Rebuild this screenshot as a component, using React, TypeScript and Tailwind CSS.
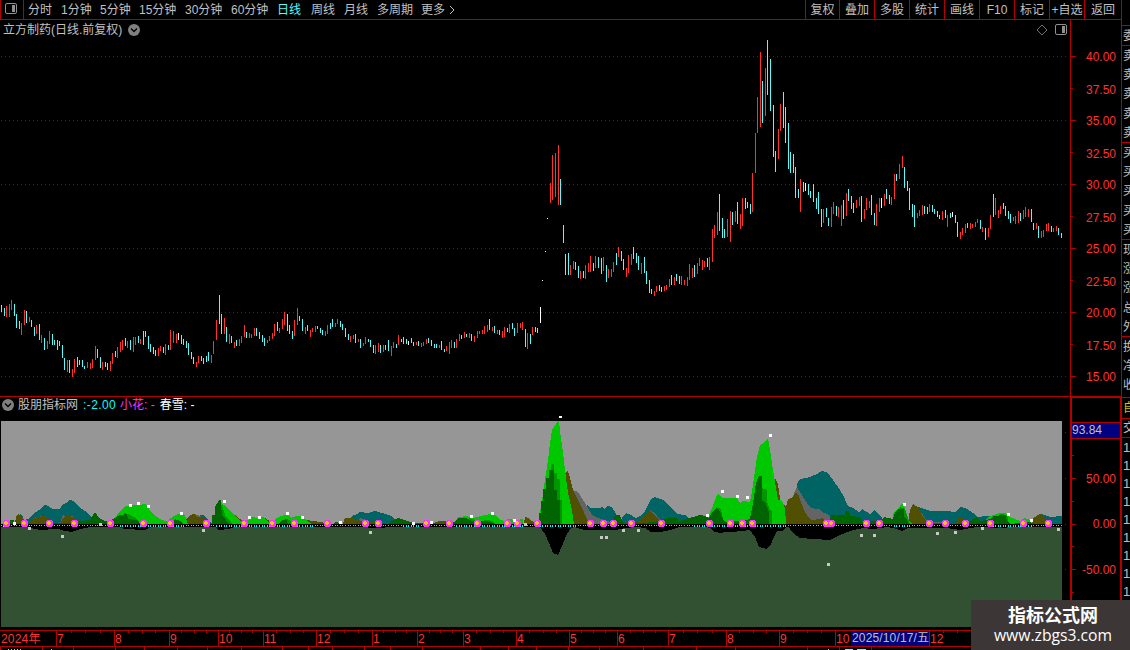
type Tone = 'r' | 'c' | 'w';

interface Bar {
  x: number;
  top: number;
  bottom: number;
  tone: Tone;
}

const TONES: Record<Tone, string> = { r: '#ff3232', c: '#54fcfc', w: '#ffffff' };

// x, tone, high-low
const BAR_DATA = `
1c305-312 4c308-316 6r306-317 9r304-317 11r300-310 14c304-316 16c314-328 19c321-329 21r323-335 24r310-325
26c311-323 29r317-322 31c320-327 34c327-336 36r325-334 39c324-340 41r335-343 44c338-350 47r341-349 49r331-344
52c334-345 54c340-345 57c340-350 59c341-346 62c345-358 64c358-370 67r360-372 69c360-373 72r369-377 74r359-373
77c357-367 79c360-365 82c360-367 84c366-369 87r362-368 90r363-369 92r359-368 95r346-360 97c349-358 100c357-368
102r362-370 105c362-367 107c363-370 110r361-371 112r353-364 115c351-357 117r347-358 120r342-352 122r340-350
125c338-346 127r341-348 130c340-350 133r337-352 135r337-345 138c336-343 140r339-344 143c331-345 145c331-337
148c336-349 150c344-352 153c347-354 155c350-356 158r348-356 160r346-351 163c347-353 165r344-355 168c345-350
170r330-350 173r331-343 176r334-343 178w333-340 181c335-344 183c339-345 186c341-348 188c343-355 191c352-359
193c357-364 196r362-367 198r356-363 201c356-361 203c358-364 206c356-362 208c352-361 211r355-363 213r341-354
216r320-340 219c295-324 221c314-334 224r318-334 226c327-342 229r334-344 231c336-343 234r342-348 236c340-346
239r339-346 241r336-343 244r325-337 246c332-338 249r333-338 251r334-338 254r328-336 256c328-336 259c332-339
262c335-342 264c338-346 267r340-343 269r336-341 272r333-339 274r324-336 277c322-331 279r328-333 282r319-329
284r312-325 287c314-331 289c325-334 292c331-339 294r320-336 297r308-325 299c316-321 302c319-331 305r327-334
307c325-331 310r330-337 312r328-332 315r326-332 317c326-329 320c328-333 322c330-335 325r331-336 327r325-334
330c323-329 332c319-327 335r323-327 337r319-324 340c321-327 342c324-330 345c328-337 348c334-340 350r336-342
353r335-339 355c334-343 358r339-342 360c339-348 363r343-346 365r337-344 368c339-342 370c340-347 373c345-353
375r345-354 378r343-352 380c345-353 383r345-352 385c345-350 388c340-351 391r346-356 393r342-348 396c344-348
398r335-345 401c339-342 403c337-344 406c339-344 408w341-345 411c338-343 413c342-346 416r342-345 418c341-346
421r343-347 423r342-346 426r339-344 428c338-343 431c340-346 434c344-348 436c344-348 439r345-348 441c341-350
444c349-352 446r346-351 449r342-354 451r340-348 454c342-348 456r339-348 459r334-341 461c335-339 464r332-338
466c334-337 469r333-338 471c334-341 474r336-342 477r331-338 479r331-334 482r330-334 484r326-334 487r325-332
489c319-330 492r327-331 494c326-333 497r330-334 499c330-335 502r331-338 504r327-337 507c328-332 509r324-333
512c323-329 514c328-336 517r323-333 520r323-328 522r322-330 525c329-347 527r333-349 530c334-344 532r327-335
535c327-332 537c328-333 540w307-323 542w280-281 545w251-252 547w218-219 550r183-203 552r155-200 555r153-197
558r145-205 560c179-205 563c225-243 565c254-275 568c253-275 570r265-275 573r261-269 575c262-270 578c266-278
580r271-279 583c271-278 585r265-279 588r263-272 590r256-272 593c263-271 595r256-268 598c257-268 601c258-274
603r257-271 606c265-282 608r269-278 611r269-277 613r262-272 616c253-265 618r247-257 621c251-261 623c259-270
626r268-277 628r255-273 631r254-265 633c247-259 636c253-263 638c256-270 641r263-274 644c257-273 646c271-284
649c280-293 651c289-294 654r291-296 656r286-292 659c285-291 661c287-292 664r286-291 666r285-290 669r279-287
671c275-285 674r277-285 676c274-281 679c276-284 681r276-285 684r280-285 687r277-286 689r264-280 692r268-278
694c265-277 697r263-274 699r258-266 702r260-270 704r261-267 707c258-267 709r257-270 712r229-262 714r225-238
717r212-235 719c194-231 722c218-238 724c229-238 727r219-237 730r211-242 732c212-225 735r211-222 737c202-224
740r214-229 742r198-226 745c198-209 747c202-208 750c204-214 752r173-212 755r133-173 757r97-133 760r52-127
762c81-123 765r68-116 767c40-95 770c59-111 773c105-157 775c151-172 778r129-159 780r104-131 783c92-128
785c107-143 788c123-169 790c152-173 793c154-173 795c167-198 798c189-198 800r179-212 803c182-192 805w183-191
808c184-195 810c191-198 813c184-202 816c198-209 818c192-214 821c209-227 823r209-223 826c208-217 828c218-226
831r207-227 833r202-214 836c206-216 838r207-217 841r205-226 843c200-219 846r193-216 848c189-201 851c196-209
853c203-213 856r200-208 859r197-206 861c196-222 864r209-219 866r198-210 869r201-208 871c195-215 874c213-225
876r204-226 879r198-212 881w198-208 884r194-206 886c189-199 889c195-204 891r197-205 894r174-199 896c174-181
899r164-179 902r156-168 904c167-188 907c181-191 909c188-210 912c204-217 914c205-227 917r213-218 919r210-216
922r205-215 924c206-214 927c207-214 929r204-212 932c205-212 934c209-214 937c211-217 939c215-219 942r211-220
945c210-218 947r215-227 950c213-218 952w212-217 955c215-223 957c222-237 960r232-239 962r228-235 965r224-233
967c223-228 970r223-229 972r224-228 975r222-227 977r219-223 980c220-229 982r227-232 985c228-240 988r228-237
990r215-229 993c194-217 995r198-215 998r210-218 1000r206-214 1003c203-209 1005c206-216 1008c211-219 1010c214-223
1013r217-221 1015r216-224 1018r211-223 1020c213-221 1023r210-219 1025r207-217 1028r209-217 1031c209-222
1033c223-230 1036r223-229 1038c226-238 1041r231-238 1043r230-237 1046r224-231 1048r223-231 1051c226-232
1053r228-232 1056r226-231 1058c228-235 1061c233-238`;

const bars: Bar[] = BAR_DATA.trim().split(/\s+/).map(s => {
  const m = s.match(/^(\d+)([rcw])(\d+)-(\d+)$/)!;
  return { x: +m[1], tone: m[2] as Tone, top: +m[3], bottom: +m[4] };
});

const BASE = 524;

const layers = [
  {
    color: '#006464',
    points:
      '15,524 17,518 20,514 22,515 24,520 28,519 33,514 39,510 45,505 48,506 53,509 60,509 62,505 66,503 70,500 73,501 78,506 85,511 90,515 92,518 95,524 195,524 196,516 203,515 208,519 212,524 345,524 352,516 357,514 360,512 368,513 375,511 382,513 391,516 396,521 398,524 586,524 587,505 590,508 600,508 602,507 604,509 608,506 612,507 616,514 620,522 622,518 626,513 631,515 636,518 642,515 645,511 651,499 655,497 663,500 668,504 672,509 677,514 685,515 688,517 692,524 795,524 797,484 800,479 810,477 817,474 822,471 828,473 833,480 838,487 843,495 848,506 853,508 859,512 862,509 867,512 870,515 874,510 882,517 883,524 916,524 918,507 930,511 947,511 955,512 961,507 967,509 973,513 977,517 987,516 993,517 1000,524 1039,524 1041,514 1050,517 1062,516',
  },
  {
    color: '#646464',
    points:
      '28,524 35,517 45,516 50,518 55,524 60,524 63,515 67,517 72,516 75,519 85,524 186,524 190,517 195,514 200,516 206,520 210,524 355,524 360,518 366,520 370,524 572,524 573,490 578,492 583,500 588,508 592,515 598,518 605,520 615,524 645,524 650,510 655,513 660,520 668,524 786,524 788,500 792,498 797,487 800,492 805,500 810,507 815,509 820,509 823,513 828,514 832,519 836,524 914,524 917,508 923,515 928,522 947,522 950,524',
  },
  {
    color: '#505000',
    points:
      '15,524 16,517 18,514 22,516 24,522 28,524 33,518 38,517 43,516 48,517 55,523 60,524 63,518 68,515 75,518 85,523 140,524 152,515 160,519 168,522 184,524 186,520 190,515 194,514 198,517 205,518 208,524 232,524 235,515 240,519 245,524 265,518 270,521 275,524 305,524 307,520 320,522 330,524 343,524 345,518 352,518 358,520 365,522 375,521 378,524 430,524 440,521 445,521 450,524 500,520 505,524 524,524 525,517 528,518 532,521 535,524 560,524 565,473 568,471 570,478 573,490 578,500 582,508 586,517 590,524 624,524 627,520 632,524 638,521 644,516 650,511 654,515 660,521 665,524 774,524 775,478 778,484 780,499 785,506 786,507 788,499 792,498 796,492 799,496 802,505 805,512 809,518 812,520 819,519 822,518 827,523 830,524 873,524 875,517 877,524 908,524 910,510 913,504 918,507 922,515 928,523 955,524 958,518 962,517 967,524 1032,524 1033,518 1040,514 1045,518 1050,524',
  },
  {
    color: '#00c800',
    points:
      '108,524 117,515 122,509 126,506 133,505 138,505 146,504 148,507 151,512 155,516 162,520 168,522 169,519 176,515 181,513 185,515 188,524 215,524 217,507 219,501 222,504 226,506 230,511 233,514 238,519 243,523 248,520 252,517 258,518 263,517 267,521 272,523 275,519 281,516 287,514 291,518 296,516 301,516 305,519 312,524 455,524 458,517 467,516 472,518 477,517 485,515 490,514 495,515 499,519 504,521 508,519 516,520 523,519 523,524 538,524 542,500 546,473 548,460 550,443 552,430 556,424 559,420 560,432 563,452 565,470 568,493 572,510 574,524 703,524 705,517 709,515 712,508 717,495 719,494 722,498 730,498 737,498 740,503 743,501 750,502 752,492 754,477 757,457 760,445 764,443 768,438 770,450 773,470 775,482 778,500 780,500 783,503 785,508 786,524 893,524 893,514 900,506 902,503 905,508 907,515 910,522 912,524 980,524 990,516 1000,513 1005,513 1010,517 1015,519 1020,521 1025,518 1030,520 1032,524',
  },
  {
    color: '#009600',
    points:
      '118,524 119,519 124,513 130,515 136,518 140,524 217,524 219,501 223,508 226,517 230,520 232,524 283,524 285,519 290,520 293,524 465,524 469,518 480,521 488,520 494,522 495,524 551,524 551,464 554,464 554,473 557,473 557,479 560,479 560,500 562,500 562,524 715,524 716,507 721,509 723,520 726,524 756,524 762,488 767,490 767,501 769,508 772,512 772,524 898,524 900,507 905,509 909,522 910,524 993,524 1000,514 1007,515 1009,524',
  },
  {
    color: '#006400',
    points:
      '9,524 10,520 14,520 14,524 75,523 80,521 90,520 94,513 97,514 98,517 103,520 108,522 115,518 120,515 127,514 128,519 138,520 140,524 171,524 175,519 180,521 184,524 212,524 212,515 215,515 215,507 219,500 221,500 221,508 223,517 226,520 229,524 279,524 281,521 286,519 288,524 333,524 336,522 342,524 388,524 392,521 398,518 402,519 413,523 440,524 455,522 458,518 465,518 468,519 475,522 486,521 495,524 539,524 539,513 541,513 541,501 543,501 543,489 546,489 546,478 549,478 549,470 554,470 554,490 557,490 557,500 560,500 560,524 613,524 615,515 620,515 622,521 625,524 655,522 667,518 675,517 680,521 688,518 693,517 700,515 705,516 709,518 712,512 717,508 720,512 723,519 725,522 743,521 750,519 752,509 754,497 756,483 759,476 762,476 762,501 765,502 769,512 769,524 829,524 831,515 845,515 845,511 849,511 850,516 860,517 862,522 882,520 884,517 893,519 895,512 898,509 904,509 904,517 907,520 909,524 965,524 973,519 977,517 980,521 990,519 993,516 1005,515 1007,520 1010,524 1030,522 1032,524',
  },
];

const SHADOW =
  '1,526 27,527 40,530 45,530 50,529 58,529 65,531 72,532 80,529 90,527 118,527 125,529 145,530 152,527 215,527 219,530 228,529 235,527 360,527 375,528 395,527 540,527 545,534 549,543 553,553 558,555 562,546 566,536 570,529 574,527 585,530 600,530 615,530 625,528 637,527 645,528 651,532 660,532 670,530 680,527 706,527 710,528 715,532 720,533 725,532 733,532 750,530 755,537 759,547 767,549 771,544 774,537 777,531 782,531 788,526 793,533 800,538 813,539 830,540 840,535 850,531 863,528 873,529 887,527 897,529 902,531 908,528 930,528 947,528 960,530 977,527 1003,528 1020,526 1062,526';

const flowers = [
  6, 24, 49, 74, 110, 143, 170, 206, 244, 272, 294, 327, 365, 378, 426, 449, 477, 507, 517, 537, 590, 603, 613, 631,
  661, 709, 730, 742, 752, 826, 831, 866, 879, 929, 945, 965, 990, 1023, 1048,
];

const snow = [
  [14, 523], [130, 505], [138, 503], [148, 506], [181, 513], [224, 501], [249, 517], [259, 517], [287, 513], [302, 517],
  [340, 522], [413, 523], [431, 522], [471, 516], [492, 513], [514, 520], [707, 515], [722, 491], [737, 496],
  [747, 497], [770, 435], [904, 504], [1008, 514], [1031, 520],
];

const dust = [
  [4, 525], [29, 528], [62, 536], [100, 524], [203, 530], [370, 532], [525, 524], [601, 537], [606, 537], [623, 530],
  [638, 530], [828, 564], [861, 535], [874, 535], [937, 533], [955, 532], [982, 528], [1058, 529],
];

// stretches where the zero line is drawn with two pixel high marks
const tall = [[118, 185], [215, 312], [402, 420], [455, 523], [538, 575], [694, 786], [893, 911], [990, 1032]];

const tabs = [
  { label: '分时', cls: 'w-[33px]' },
  { label: '1分钟', cls: 'w-[39px]' },
  { label: '5分钟', cls: 'w-[39px]' },
  { label: '15分钟', cls: 'w-[46px]' },
  { label: '30分钟', cls: 'w-[46px]' },
  { label: '60分钟', cls: 'w-[46px]' },
  { label: '日线', cls: 'w-[34px] text-[#54fcfc]' },
  { label: '周线', cls: 'w-[33px]' },
  { label: '月线', cls: 'w-[33px]' },
  { label: '多周期', cls: 'w-[44px]' },
  { label: '更多', cls: 'w-[28px]' },
];

const tools = ['复权', '叠加', '多股', '统计', '画线', 'F10', '标记', '+自选', '返回'];

const prices = ['40.00', '37.50', '35.00', '32.50', '30.00', '27.50', '25.00', '22.50', '20.00', '17.50', '15.00'];

const months = [
  { x: 56, label: '7' }, { x: 114, label: '8' }, { x: 169, label: '9' }, { x: 218, label: '10' },
  { x: 263, label: '11' }, { x: 316, label: '12' }, { x: 372, label: '1' }, { x: 417, label: '2' },
  { x: 463, label: '3' }, { x: 516, label: '4' }, { x: 569, label: '5' }, { x: 617, label: '6' },
  { x: 668, label: '7' }, { x: 726, label: '8' }, { x: 779, label: '9' }, { x: 835, label: '10' },
  { x: 929, label: '12' }, { x: 985, label: '' },
];

const sideGroups = [
  { cls: 'h-[20px]', chars: ['委'], row: 'h-[19px]' },
  { cls: 'h-[97px]', chars: ['卖', '卖', '卖', '卖', '卖'], row: 'h-[19.4px]' },
  { cls: 'h-[97px]', chars: ['买', '买', '买', '买', '买'], row: 'h-[19.4px]' },
  { cls: 'h-[97px]', chars: ['现', '涨', '涨', '总', '外'], row: 'h-[19.4px]' },
  { cls: 'h-[61px]', chars: ['换', '净', '收'], row: 'h-[19.4px]' },
  { cls: 'h-[21px] text-[#c8c800]', chars: ['自'], row: 'h-[20px]' },
  { cls: 'h-[19px]', chars: ['交'], row: 'h-[18px]' },
  { cls: 'h-[212px]', chars: ['1', '1', '1', '1', '1', '1', '1', '1', '1'], row: 'h-[18px] text-[13px]' },
];

function ChevronDot() {
  return (
    <svg width="12" height="12" viewBox="0 0 12 12" className="shrink-0">
      <circle cx="6" cy="6" r="6" fill="#808080" />
      <path d="M3 4.5 L6 7.5 L9 4.5" fill="none" stroke="#000" strokeWidth="1.3" />
    </svg>
  );
}

function PanelIcon() {
  return (
    <svg width="12" height="11" viewBox="0 0 12 11" className="shrink-0">
      <rect x="0.5" y="0.5" width="11" height="10" rx="1.5" fill="none" stroke="#909090" />
      <rect x="7" y="2" width="3" height="7" fill="#909090" />
    </svg>
  );
}

function Toolbar() {
  return (
    <div className="flex h-[20px] w-[1122px] shrink-0 border-b border-[#b40000]">
      <div className="flex w-[24px] items-center border-x border-[#b40000] pb-0.5 pl-1">
        <PanelIcon />
      </div>
      <div className="flex items-center pl-1">
        {tabs.map(t => (
          <span key={t.label} className={t.cls}>{t.label}</span>
        ))}
        <svg width="6" height="10" viewBox="0 0 6 10">
          <path d="M1 1 L5 5 L1 9" fill="none" stroke="#c0c0c0" />
        </svg>
      </div>
      <div className="ml-auto flex">
        {tools.map((t, i) => (
          <span
            key={t}
            className={`flex items-center justify-center border-l border-[#b40000] ${
              i === 0 ? 'w-[34px]' : i === 8 ? 'w-[37px]' : 'w-[35px]'
            }`}
          >
            {t}
          </span>
        ))}
        <span className="w-px bg-[#b40000]" />
      </div>
    </div>
  );
}

function PriceChart() {
  return (
    <div className="w-[1070px]">
      <div className="flex h-[20px] items-center pb-px pl-[3px]">
        <span>立方制药(日线.前复权)</span>
        <span className="ml-1.5"><ChevronDot /></span>
        <svg width="12" height="12" viewBox="0 0 12 12" className="ml-auto">
          <path d="M6 1 L11 6 L6 11 L1 6 Z" fill="none" stroke="#707070" />
        </svg>
        <span className="ml-[7px] mr-[3px]"><PanelIcon /></span>
      </div>
      <svg width="1070" height="356" viewBox="0 40 1070 356" shapeRendering="crispEdges" className="block">
        {[56, 120, 184, 248, 312, 376].map(y => (
          <line key={y} x1="1" x2="1068" y1={y + 0.5} y2={y + 0.5} stroke="#960000" strokeDasharray="1 3" />
        ))}
        {bars.map(b => (
          <rect key={b.x} x={b.x} y={b.top} width="1" height={b.bottom - b.top} fill={TONES[b.tone]} />
        ))}
      </svg>
    </div>
  );
}

function PriceAxis() {
  return (
    <div className="w-[52px] border-x border-[#b40000] pt-[20px] text-[#ff3232]">
      {prices.map((p, i) => (
        <div key={p} className="flex h-[32px] items-center">
          <span className={`h-px bg-[#b40000] ${i % 2 === 0 ? 'w-[5px]' : 'w-[2px]'}`} />
          <span className={`ml-auto mr-[5px] ${i % 2 === 0 ? 'pt-px' : 'pt-[3px]'}`}>{p}</span>
        </div>
      ))}
    </div>
  );
}

function Indicator() {
  return (
    <div className="w-[1070px]">
      <div className="flex h-[24px] items-center pb-[8px] pl-[2px]">
        <ChevronDot />
        <span className="ml-[4px]">股朋指标网</span>
        <span className="ml-[5px] tracking-[0.4px] text-[#00ffff]">:-2.00</span>
        <span className="ml-1 text-[#ff32ff]">小花: -</span>
        <span className="ml-[5px] text-white">春雪: -</span>
      </div>
      <svg width="1070" height="209" viewBox="0 421 1070 209" shapeRendering="crispEdges" className="block overflow-visible">
        <rect x="1" y="421" width="1061" height="103" fill="#969696" />
        <rect x="1" y="527" width="1061" height="100" fill="#325032" />
        {layers.map(l => (
          <polygon key={l.color} points={`1,${BASE} ${l.points} 1062,${BASE}`} fill={l.color} />
        ))}
        <polygon points={`1,524 ${SHADOW} 1062,524`} fill="#000" />
        {bars.map(b => (
          <rect
            key={b.x}
            x={b.x}
            y="525"
            width="1"
            height={tall.some(([from, to]) => b.x >= from && b.x <= to) ? 2 : 1}
            fill="#00ffff"
          />
        ))}
        {dust.map(([x, y]) => (
          <rect key={`${x}-${y}`} x={x - 1} y={y - 1} width="3" height="3" fill="#c8c8c8" />
        ))}
        {flowers.map(x => (
          <g key={x}>
            <path d={`M${x - 2} 520h5v1h1v5h-1v1h-5v-1h-1v-5h1z`} fill="#ff32ff" />
            <path d={`M${x - 1} 521h2v1h1v2h-1v1h-2v-1h-1v-2h1z`} fill="#ffc800" />
          </g>
        ))}
        {snow.map(([x, y]) => (
          <rect key={`${x}-${y}`} x={x - 1} y={y - 1} width="3" height="3" fill="#fff" />
        ))}
        <rect x="559" y="416" width="3" height="2" fill="#fff" />
        {[432, 478, 524, 569].map(y => (
          <rect key={y} x="1065" y={y} width="1" height="1" fill="#b40000" />
        ))}
      </svg>
    </div>
  );
}

function IndicatorAxis() {
  return (
    <div className="flex w-[52px] flex-col border-x-2 border-t border-[#b40000] text-[#ff3232]">
      <div className="h-[24px]" />
      <div className="flex h-[17px] items-center border-y border-[#b40000] bg-[#000080] pb-px text-[#c0c0c0]">93.84</div>
      <div className="flex h-[17px] items-end"><span className="h-px w-[2px] bg-[#b40000]" /></div>
      {['50.00', '0.00', '-50.00'].map(v => (
        <div key={v} className="relative flex h-[45.6px] items-center">
          <span className="h-px w-[4px] bg-[#b40000]" />
          <span className="ml-auto mr-[4px]">{v}</span>
          <span className="absolute bottom-0 left-0 h-px w-[2px] bg-[#b40000]" />
        </div>
      ))}
    </div>
  );
}

function TimeAxis() {
  return (
    <div className="relative flex h-[17px] w-[1122px] border-y border-[#b40000] text-[#ff3232]">
      <span className="w-[56px] pl-px leading-[17px] tracking-[0.2px]">2024年</span>
      {months.slice(0, -1).map((m, i) => {
        const width = months[i + 1].x - m.x;
        return (
          <span key={m.x} className="flex h-full shrink-0 border-l border-[#b40000]" style={{ width }}>
            <span className="w-0 leading-[17px]">{m.label}</span>
            <span className="flex h-[2px] flex-1 justify-evenly">
              <i className="w-px bg-[#b40000]" />
              <i className="w-px bg-[#b40000]" />
              <i className="w-px bg-[#b40000]" />
            </span>
          </span>
        );
      })}
      <span className="absolute left-[851px] top-0 h-[15px] w-[78px] bg-[#000080] pl-px leading-[15px] tracking-[0.15px] whitespace-nowrap text-[#c0c0c0]">
        2025/10/17/五
      </span>
    </div>
  );
}

function FooterStrip() {
  return (
    <svg width="1122" height="3" viewBox="0 0 1122 3" shapeRendering="crispEdges" className="block">
      {[0, 42, 73, 115, 144, 177, 207, 241, 282, 308, 332, 364, 390, 422, 480, 508, 536, 568, 599, 643, 696, 735, 807, 839, 871].map(x => (
        <rect key={x} x={x} y="0" width="1" height="3" fill="#b40000" />
      ))}
      {[8, 11, 14, 17, 20, 51, 828].map(x => (
        <rect key={x} x={x} y="2" width="1" height="1" fill="#c0c0c0" />
      ))}
      <rect x="845" y="2" width="8" height="1" fill="#54fcfc" />
      <rect x="857" y="2" width="9" height="1" fill="#54fcfc" />
    </svg>
  );
}

function SideStrip() {
  return (
    <div className="flex w-[8px] shrink-0 flex-col overflow-hidden pt-[25px]">
      {sideGroups.map((g, i) => (
        <div key={i} className={`shrink-0 border-t border-[#b40000] pl-px ${g.cls}`}>
          {g.chars.map((c, n) => (
            <div key={n} className={`flex items-center ${g.row}`}>{c}</div>
          ))}
        </div>
      ))}
    </div>
  );
}

export default function App() {
  return (
    <div className="relative flex h-[650px] w-[1130px] overflow-hidden bg-black font-['Liberation_Sans','Noto_Sans_CJK_SC',sans-serif] text-[12px] leading-none text-[#c0c0c0]">
      <div className="flex w-[1122px] shrink-0 flex-col">
        <Toolbar />
        <div className="flex h-[376px] shrink-0">
          <PriceChart />
          <PriceAxis />
        </div>
        <div className="flex h-[234px] shrink-0 border-t border-[#b40000]">
          <Indicator />
          <IndicatorAxis />
        </div>
        <TimeAxis />
        <FooterStrip />
      </div>
      <SideStrip />
      <div className="absolute left-[971px] top-[600px] flex h-[50px] w-[159px] flex-col items-center bg-[#3c3636] pl-[5px] pt-[6px] font-['Open_Sans','Noto_Sans_CJK_SC',sans-serif] text-white">
        <span className="text-[18px] font-bold leading-[19px]">指标公式网</span>
        <span className="text-[15.7px] leading-[20px]">www.zbgs3.com</span>
      </div>
    </div>
  );
}
